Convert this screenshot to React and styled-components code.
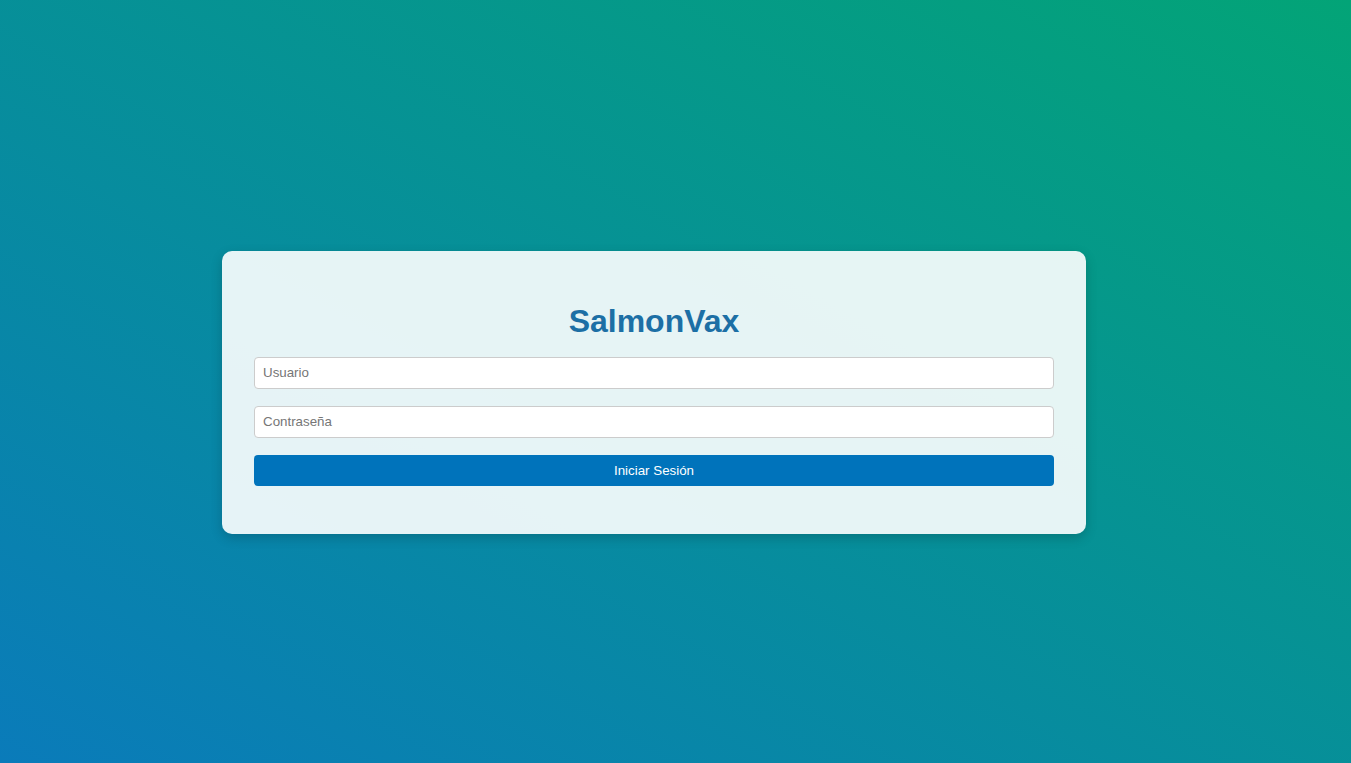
import React from "react";
import styled, { createGlobalStyle } from "styled-components";

const Global = createGlobalStyle`
  html, body { margin: 0; padding: 0; }
  body { font-family: "Liberation Sans", Arial, sans-serif; }
  * { box-sizing: border-box; }
`;

const Page = styled.div`
  min-height: 100vh;
  display: flex;
  align-items: center;
  justify-content: center;
  padding: 21px 43px 0 0;
  background: linear-gradient(to top right, #0a7bba, #03a477);
`;

const Card = styled.div`
  width: 864px;
  padding: 32px 32px 48px;
  background: rgba(255, 255, 255, 0.9);
  border-radius: 10px;
  box-shadow: 0 4px 12px rgba(0, 0, 0, 0.18);
`;

const Title = styled.h2`
  margin: 20px 0 17px;
  text-align: center;
  font-size: 32px;
  font-weight: 700;
  color: #1c6fa5;
`;

const Form = styled.form`
  display: flex;
  flex-direction: column;
  gap: 17px;
`;

const Input = styled.input`
  width: 100%;
  height: 32px;
  padding: 0 8px;
  border: 1px solid #cccccc;
  border-radius: 4px;
  background: #fff;
  font-family: "Liberation Sans", Arial, sans-serif;
  font-size: 13.33px;
  color: #333;
  outline: none;
  &::placeholder { color: #767676; }
`;

const Button = styled.button`
  width: 100%;
  height: 31px;
  border: none;
  border-radius: 4px;
  background: #0073bb;
  color: #fff;
  font-family: "Liberation Sans", Arial, sans-serif;
  font-size: 13.33px;
  cursor: pointer;
`;

export default function App() {
  return (
    <>
      <Global />
      <Page>
        <Card>
          <Title>SalmonVax</Title>
          <Form onSubmit={(e) => e.preventDefault()}>
            <Input type="text" placeholder="Usuario" />
            <Input type="password" placeholder="Contraseña" />
            <Button type="submit">Iniciar Sesión</Button>
          </Form>
        </Card>
      </Page>
    </>
  );
}
